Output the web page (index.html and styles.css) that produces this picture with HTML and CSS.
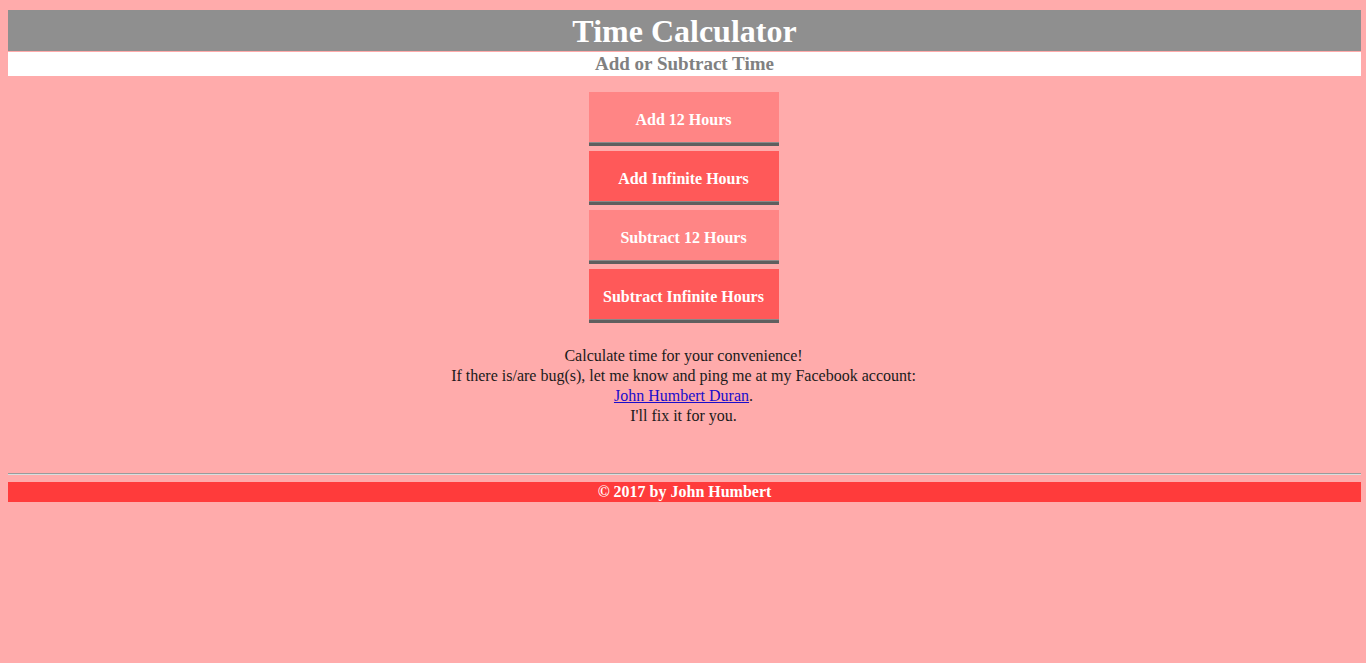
FILE: index.html
```html
<!DOCTYPE html>
<html>
<head>
<meta charset="utf-8">
<title>Time Calculator</title>
<link rel="stylesheet" href="styles.css">
</head>
<body>
<header class="header">
  <h1 class="title">Time Calculator</h1>
  <h3 class="subtitle">Add or Subtract Time</h3>
</header>
<main class="main">
  <div class="buttons">
    <button class="btn btn-light">Add 12 Hours</button>
    <button class="btn btn-dark">Add Infinite Hours</button>
    <button class="btn btn-light">Subtract 12 Hours</button>
    <button class="btn btn-dark">Subtract Infinite Hours</button>
  </div>
  <p class="info">Calculate time for your convenience!<br>If there is/are bug(s), let me know and ping me at my Facebook account:<br><a href="#" class="link">John Humbert Duran</a>.<br>I'll fix it for you.</p>
</main>
<hr class="rule">
<footer class="footer">© 2017 by John Humbert</footer>
</body>
</html>
```
FILE: styles.css
```css
html {
  background: #ffabab;
}
body {
  margin: 10px 5px 0 8px;
  font-family: "Liberation Serif", "Times New Roman", serif;
  font-size: 16px;
  color: #222;
}
.header {
  text-align: center;
}
.title {
  margin: 0;
  height: 41px;
  line-height: 42px;
  background: #8f8f8f;
  color: #fff;
  font-size: 32px;
  font-weight: bold;
}
.subtitle {
  margin: 1px 0 0;
  height: 24px;
  line-height: 24px;
  background: #fff;
  color: #808080;
  font-size: 19px;
  font-weight: bold;
}
.main {
  display: flex;
  flex-direction: column;
  align-items: center;
  padding-right: 2px;
}
.buttons {
  display: flex;
  flex-direction: column;
  gap: 5px;
  margin-top: 16px;
}
.btn {
  width: 190px;
  height: 54px;
  padding: 4px 0 0;
  border: 0;
  border-bottom: 3px solid #5f5f5f;
  box-shadow: inset 0 -1px 0 #8a8a8a;
  color: #fff;
  font-family: "Liberation Serif", "Times New Roman", serif;
  font-size: 16px;
  font-weight: bold;
  cursor: pointer;
}
.btn-light {
  background: #ff8585;
}
.btn-dark {
  background: #ff5959;
}
.info {
  margin: 23px 0 0;
  text-align: center;
  line-height: 20px;
  color: #1a1a1a;
}
.link {
  color: #1a0dcc;
}
.rule {
  margin: 47px 0 0;
  height: 0;
  border: 0;
  border-top: 1px solid #9a9a9a;
  border-bottom: 1px solid #d8dede;
}
.footer {
  margin-top: 7px;
  height: 20px;
  line-height: 20px;
  background: #ff3b3b;
  color: #fff;
  font-weight: bold;
  text-align: center;
}
```
